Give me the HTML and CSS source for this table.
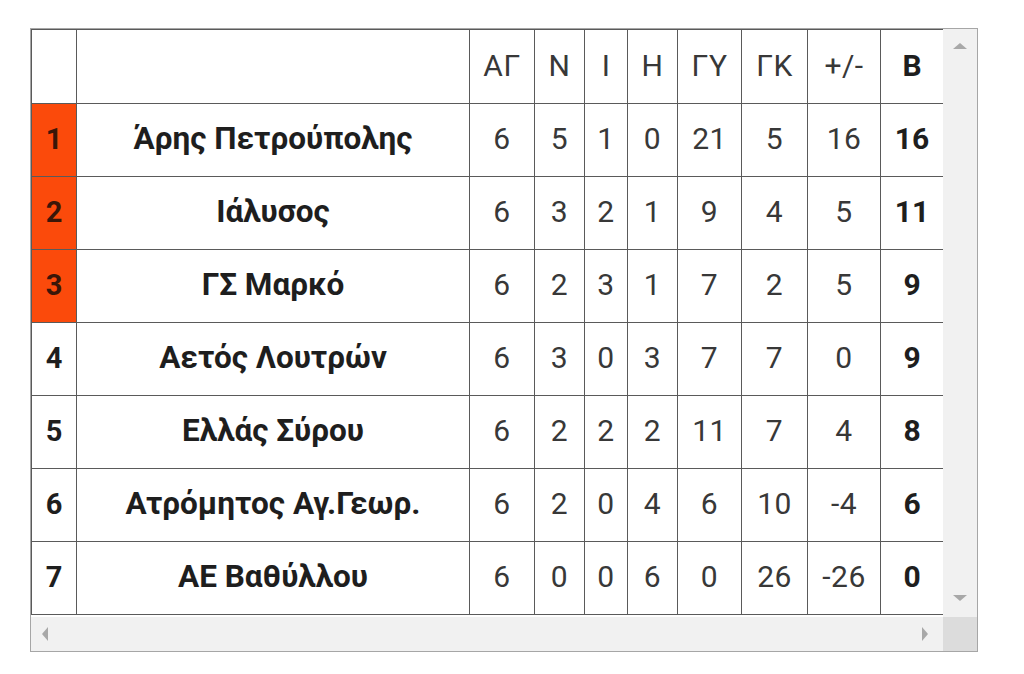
FILE: index.html
```html
<!DOCTYPE html>
<html lang="el">
<head>
<meta charset="utf-8">
<title>Βαθμολογία</title>
<link rel="stylesheet" href="styles.css">
</head>
<body>
<div class="frame">
  <div class="viewport">
    <table class="standings">
      <colgroup>
        <col class="c-pos"><col class="c-team"><col class="c-ag"><col class="c-n"><col class="c-i"><col class="c-h"><col class="c-gy"><col class="c-gk"><col class="c-diff"><col class="c-b">
      </colgroup>
      <thead>
        <tr>
          <th></th><th></th><th>ΑΓ</th><th>Ν</th><th>Ι</th><th>Η</th><th>ΓΥ</th><th>ΓΚ</th><th>+/-</th><th class="pts">Β</th>
        </tr>
      </thead>
      <tbody>
        <tr><td class="pos hl">1</td><td class="team">Άρης Πετρούπολης</td><td>6</td><td>5</td><td>1</td><td>0</td><td>21</td><td>5</td><td>16</td><td class="pts">16</td></tr>
        <tr><td class="pos hl">2</td><td class="team">Ιάλυσος</td><td>6</td><td>3</td><td>2</td><td>1</td><td>9</td><td>4</td><td>5</td><td class="pts">11</td></tr>
        <tr><td class="pos hl">3</td><td class="team">ΓΣ Μαρκό</td><td>6</td><td>2</td><td>3</td><td>1</td><td>7</td><td>2</td><td>5</td><td class="pts">9</td></tr>
        <tr><td class="pos">4</td><td class="team">Αετός Λουτρών</td><td>6</td><td>3</td><td>0</td><td>3</td><td>7</td><td>7</td><td>0</td><td class="pts">9</td></tr>
        <tr><td class="pos">5</td><td class="team">Ελλάς Σύρου</td><td>6</td><td>2</td><td>2</td><td>2</td><td>11</td><td>7</td><td>4</td><td class="pts">8</td></tr>
        <tr><td class="pos">6</td><td class="team">Ατρόμητος Αγ.Γεωρ.</td><td>6</td><td>2</td><td>0</td><td>4</td><td>6</td><td>10</td><td>-4</td><td class="pts">6</td></tr>
        <tr><td class="pos">7</td><td class="team">ΑΕ Βαθύλλου</td><td>6</td><td>0</td><td>0</td><td>6</td><td>0</td><td>26</td><td>-26</td><td class="pts">0</td></tr>
      </tbody>
    </table>
  </div>
  <div class="vbar">
    <span class="arrow up"></span>
    <span class="arrow down"></span>
  </div>
  <div class="hbar">
    <span class="arrow left"></span>
    <span class="arrow right"></span>
  </div>
  <div class="corner"></div>
</div>
</body>
</html>
```
FILE: styles.css
```css
html, body {
  margin: 0;
  padding: 0;
  background: #ffffff;
}

body {
  font-family: Roboto, "Liberation Sans", Arial, sans-serif;
  color: #333333;
}

.frame {
  margin: 28px 0 0 30px;
  width: 946px;
  height: 622px;
  border: 1px solid #a6a6a6;
  display: grid;
  grid-template-columns: 912px 34px;
  grid-template-rows: 588px 34px;
}

.viewport {
  overflow: hidden;
}

.standings {
  border-collapse: collapse;
  table-layout: fixed;
  width: 912px;
}

.c-pos { width: 45px; }
.c-team { width: 393px; }
.c-ag { width: 65px; }
.c-n { width: 50px; }
.c-i { width: 43px; }
.c-h { width: 50px; }
.c-gy { width: 64px; }
.c-gk { width: 66px; }
.c-diff { width: 73px; }
.c-b { width: 63px; }

.standings th,
.standings td {
  border: 1px solid #5a5a5a;
  text-align: center;
  padding: 0 0 3px 0;
  font-size: 30px;
  font-weight: 400;
  letter-spacing: 0.5px;
  color: #383838;
}

.standings thead th {
  height: 70px;
}

.standings tbody td {
  height: 69px;
}

.standings .pts,
.standings .pos,
.standings .team {
  font-weight: 700;
  letter-spacing: 0;
  color: #1e1e1e;
}

.standings .team {
  font-size: 31.5px;
}

.standings .pos {
  font-size: 29px;
}

.standings .pts {
  font-size: 30px;
}

.standings .hl {
  background: #fb4a0b;
  color: #3a1608;
}

.vbar,
.hbar {
  background: #f1f1f1;
  position: relative;
}

.corner {
  background: #dcdcdc;
}

.arrow {
  position: absolute;
  width: 0;
  height: 0;
  border-style: solid;
  border-color: transparent;
}

.arrow.up {
  top: 14px;
  left: 10px;
  border-width: 0 7px 6px 7px;
  border-bottom-color: #a8a8a8;
}

.arrow.down {
  bottom: 16px;
  left: 10px;
  border-width: 6px 7px 0 7px;
  border-top-color: #a8a8a8;
}

.arrow.left {
  left: 11px;
  top: 10px;
  border-width: 7px 6px 7px 0;
  border-right-color: #a8a8a8;
}

.arrow.right {
  right: 15px;
  top: 10px;
  border-width: 7px 0 7px 6px;
  border-left-color: #a8a8a8;
}
```
